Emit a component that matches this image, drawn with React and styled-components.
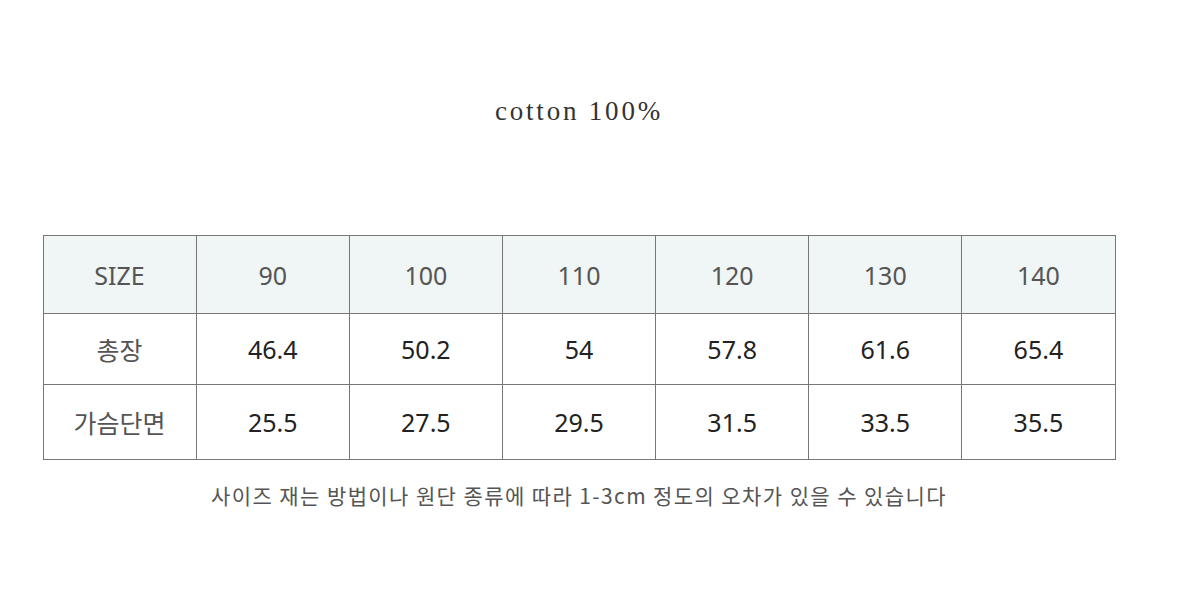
import React from 'react';
import styled, { createGlobalStyle } from 'styled-components';

const Global = createGlobalStyle`
  html, body {
    margin: 0;
    padding: 0;
    background: #ffffff;
  }
`;

const Page = styled.div`
  width: 1182px;
  height: 591px;
  display: flex;
  flex-direction: column;
  align-items: center;
  box-sizing: border-box;
  padding: 92px 24px 0 0;
  font-family: "Noto Sans", "Noto Sans CJK KR", sans-serif;
`;

const Material = styled.div`
  font-family: "Liberation Serif", serif;
  font-size: 27px;
  color: #333;
  letter-spacing: 2.8px;
  line-height: 38px;
`;

const Table = styled.table`
  margin-top: 105px;
  width: 1073px;
  border-collapse: collapse;
  table-layout: fixed;
  border: 1px solid #777;
`;

const Cell = styled.td`
  border: 1px solid #777;
  text-align: center;
  font-size: 25px;
  height: ${props => props.h}px;
  padding: 0;
  color: ${props => (props.head ? '#555' : '#222')};
  background: ${props => (props.head ? '#f0f5f6' : '#fff')};
`;

const Note = styled.div`
  margin-top: 20px;
  font-size: 21px;
  color: #555;
  font-family: "Noto Sans CJK KR", sans-serif;
  letter-spacing: 1.4px;
`;

const sizes = ['SIZE', '90', '100', '110', '120', '130', '140'];
const rows = [
    { h: 70, cells: ['총장', '46.4', '50.2', '54', '57.8', '61.6', '65.4'] },
    { h: 74, cells: ['가슴단면', '25.5', '27.5', '29.5', '31.5', '33.5', '35.5'] },
];

export default function App() {
    return (
        <Page>
            <Global />
            <Material>cotton 100%</Material>
            <Table>
                <tbody>
                    <tr>
                        {sizes.map((s, i) => (
                            <Cell key={i} head h={77}>{s}</Cell>
                        ))}
                    </tr>
                    {rows.map((row, r) => (
                        <tr key={r}>
                            {row.cells.map((c, i) => (
                                <Cell key={i} h={row.h} style={i === 0 ? { color: '#555' } : undefined}>{c}</Cell>
                            ))}
                        </tr>
                    ))}
                </tbody>
            </Table>
            <Note>사이즈 재는 방법이나 원단 종류에 따라 1-3cm 정도의 오차가 있을 수 있습니다</Note>
        </Page>
    );
}
